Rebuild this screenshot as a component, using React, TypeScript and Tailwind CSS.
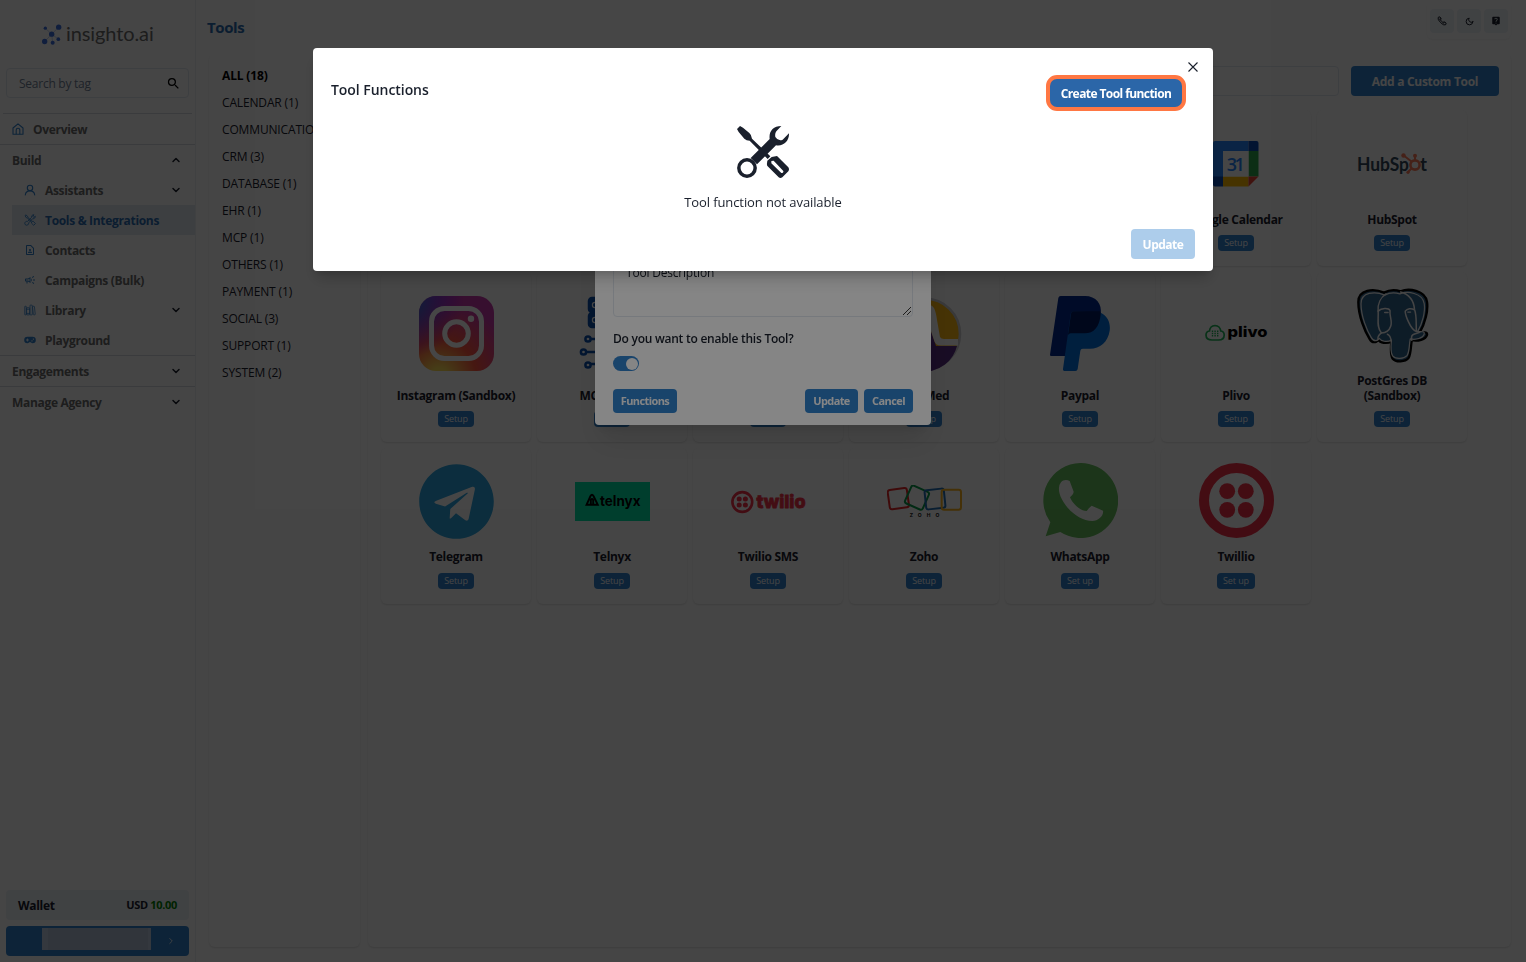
import type { ReactNode } from "react";
import { LuChevronDown, LuChevronUp, LuChevronRight } from "react-icons/lu";
import { FiMoon } from "react-icons/fi";
import { MdSearch, MdLiveHelp, MdOutlineContactPage, MdOutlineCampaign } from "react-icons/md";
import { IoLibraryOutline } from "react-icons/io5";
import { FaTelegram } from "react-icons/fa";

function HomeIcon() {
  return (
    <svg width="12" height="12" viewBox="0 0 12 12" fill="none" stroke="currentColor" strokeWidth="1.1">
      <path d="M1 5 L6 .9 L11 5 V11.3 H1 Z" strokeLinejoin="round" />
      <path d="M4.2 11.3 V7 a1.8 1.8 0 0 1 3.6 0 V11.3" />
    </svg>
  );
}

function PersonIcon() {
  return (
    <svg width="12" height="12" viewBox="0 0 12 12" fill="none" stroke="currentColor" strokeWidth="1.1">
      <circle cx="6" cy="4" r="2.7" />
      <path d="M1.3 11 C1.6 8.2 3.4 6.9 6 6.9 S10.4 8.2 10.7 11" strokeLinecap="round" />
    </svg>
  );
}

function ToolsOutlineIcon() {
  return (
    <svg width="12" height="12" viewBox="0 0 12 12" fill="none" stroke="currentColor" strokeWidth=".9" strokeLinejoin="round">
      <path d="M1 1.7 L1.9 .9 L3.6 2.3 L3.8 3.3 L8 7.4 L9.3 7.3 L11.4 9.6 L9.7 11.3 L7.4 9.1 L7.5 8 L3.2 3.9 L2.2 3.6Z" />
      <path d="M10 .8 C8.2 .7 7.2 2 7.5 3.4 L3.6 7.4 C2 7 .8 8.1 .8 9.5 A1.9 1.9 0 0 0 4.5 9.9 L5 8.5 L8.6 4.7 C10.3 5 11.3 3.8 11.3 2.2 L9.9 3.4 L8.7 2.5Z" />
    </svg>
  );
}

function GamepadIcon() {
  return (
    <svg width="12" height="8" viewBox="0 0 12 8" fill="currentColor">
      <path
        fillRule="evenodd"
        d="M3.4 .8 H8.6 A3.2 3.2 0 0 1 8.6 7.2 Q7.5 7.2 6.8 6.3 H5.2 Q4.5 7.2 3.4 7.2 A3.2 3.2 0 0 1 3.4 .8Z M3 2.6 V3.6 H2 V4.4 H3 V5.4 H3.8 V4.4 H4.8 V3.6 H3.8 V2.6Z M8 4.3 a.6 .6 0 1 0 .01 0Z M9.4 2.5 a.6 .6 0 1 0 .01 0Z"
      />
    </svg>
  );
}

function PhoneIcon() {
  return (
    <svg width="10" height="10" viewBox="0 0 10 10" fill="none" stroke="currentColor" strokeWidth="1">
      <path d="M1.1 1.6 Q2 .4 3 1 L4.1 2.6 Q4.2 3.2 3.4 3.9 Q4.3 5.5 6 6.5 Q6.8 5.7 7.4 5.9 L9 7 Q9.5 7.9 8.4 8.9 Q6.6 9.6 3.7 6.7 Q.4 3.4 1.1 1.6Z M2.2 3.4 L4 2.6 M6.3 7.6 L7.4 6" />
    </svg>
  );
}

function BrandMark() {
  return (
    <svg width="20" height="21" viewBox="0 0 60 62" fill="#3b6fe0" stroke="#3b6fe0" strokeWidth="1.5">
      <path d="M29 30 L50 9 M29 30 L10 12 M29 30 L8 52 M29 30 L49 45 M29 30 L32 56" opacity=".6" />
      <circle cx="50" cy="9" r="8" stroke="none" />
      <circle cx="10" cy="12" r="5" stroke="none" />
      <circle cx="29" cy="30" r="8" stroke="none" />
      <circle cx="8" cy="52" r="8" stroke="none" />
      <circle cx="49" cy="45" r="5.5" stroke="none" />
      <circle cx="32" cy="56" r="6" stroke="none" />
    </svg>
  );
}

function SubItem({ icon, label, active, chevron }: { icon: ReactNode; label: string; active?: boolean; chevron?: boolean }) {
  return (
    <div className={`ml-3 flex h-[30px] items-center pl-3 pr-[13px] ${active ? "bg-[#e2e8f0] text-[#2b6cb0]" : "text-[#6b6b6b]"}`}>
      <span className="flex w-3 justify-center text-[12px] text-[#3182ce]">{icon}</span>
      <span className="ml-[9px] flex-1 whitespace-nowrap pt-[2px]">{label}</span>
      {chevron && <LuChevronDown size={12} strokeWidth={3} className="text-[#1a202c]" />}
    </div>
  );
}

function Section({ label, open }: { label: string; open?: boolean }) {
  return (
    <div className="flex h-[31px] items-center border-t border-[#d5d9e0] pl-3 pr-[13px] text-[#6b6b6b]">
      <span className="flex-1 pt-[2px]">{label}</span>
      {open ? (
        <LuChevronUp size={12} strokeWidth={3} className="text-[#1a202c]" />
      ) : (
        <LuChevronDown size={12} strokeWidth={3} className="text-[#1a202c]" />
      )}
    </div>
  );
}

function Sidebar() {
  return (
    <aside className="flex w-[196px] shrink-0 flex-col border-r border-[#edf0f4] text-[12px] font-bold tracking-[-0.32px]">
      <div className="flex h-[68px] items-center gap-[4px] pl-[42px]">
        <BrandMark />
        <span className="pb-[3px] font-['Lato',sans-serif] text-[20px] font-normal leading-5 tracking-[-0.1px] text-[#6d6d6d]">insighto.ai</span>
      </div>
      <div className="mx-[6px] flex h-[30px] items-center rounded border border-[#e2e8f0] pl-3 pr-[7px] font-normal text-[#718096]">
        <span className="flex-1 pt-[2px] tracking-[-0.25px]">Search by tag</span>
        <MdSearch size={15} className="text-black" />
      </div>
      <div className="mx-[3px] mt-[15px] h-px bg-[#d5d9e0]" />
      <div className="flex h-[30px] items-center pl-3 text-[#6b6b6b]">
        <span className="text-[#3182ce]">
          <HomeIcon />
        </span>
        <span className="ml-[9px] pt-[2px]">Overview</span>
      </div>
      <Section label="Build" open />
      <SubItem icon={<PersonIcon />} label="Assistants" chevron />
      <SubItem icon={<ToolsOutlineIcon />} label="Tools & Integrations" active />
      <SubItem icon={<MdOutlineContactPage />} label="Contacts" />
      <SubItem icon={<MdOutlineCampaign />} label="Campaigns (Bulk)" />
      <SubItem icon={<IoLibraryOutline />} label="Library" chevron />
      <SubItem icon={<GamepadIcon />} label="Playground" />
      <Section label="Engagements" />
      <Section label="Manage Agency" />
      <div className="mx-[6px] mt-auto flex h-[30px] items-center rounded bg-[#edf2f7] px-3 pt-px text-[#1a202c]">
        <span className="flex-1">Wallet</span>
        <span className="text-[11px]">
          USD <span className="text-[#008000]">10.00</span>
        </span>
      </div>
      <div className="mx-[6px] mb-[6px] mt-[6px] flex h-[30px] items-center rounded bg-[#3182ce] pl-9 text-white">
        <div className="mb-1 flex h-[22px] w-[109px] bg-[#bfcfe3]">
          <div className="ml-[6px] w-[100px] bg-[#b4c5da]" />
        </div>
        <LuChevronRight size={10} className="ml-[15px]" />
      </div>
    </aside>
  );
}

const CATEGORIES = [
  "ALL (18)",
  "CALENDAR (1)",
  "COMMUNICATION (4)",
  "CRM (3)",
  "DATABASE (1)",
  "EHR (1)",
  "MCP (1)",
  "OTHERS (1)",
  "PAYMENT (1)",
  "SOCIAL (3)",
  "SUPPORT (1)",
  "SYSTEM (2)",
];

function CalendarLogo() {
  return (
    <svg width="46" height="46" viewBox="0 0 46 46">
      <path d="M2 0 H35.5 V10 H10 V36 H0 V2 Q0 0 2 0Z" fill="#2684fc" />
      <path d="M35.5 0 H43.5 Q45.5 0 45.5 2 V10 H35.5Z" fill="#0b4bb3" />
      <path d="M35.5 10 H45.5 V35.5 H35.5Z" fill="#2da94f" />
      <path d="M10 35.5 H35.5 V45.5 H10Z" fill="#ffba00" />
      <path d="M0 35.5 H10 V45.5 H2 Q0 45.5 0 43.5Z" fill="#0b4bb3" />
      <path d="M35.5 35.5 H45.5 L35.5 45.5Z" fill="#ea4335" />
      <path d="M10 10 H35.5 V35.5 H10Z" fill="#fff" />
      <text x="22.7" y="29.5" textAnchor="middle" fontFamily="Open Sans, sans-serif" fontWeight="600" fontSize="18" fill="#2684fc" textLength="18">
        31
      </text>
    </svg>
  );
}

function HubspotLogo() {
  return (
    <svg width="70" height="22" viewBox="0 0 70 22">
      <text x="0" y="17.5" fontFamily="Lato, sans-serif" fontWeight="700" fontSize="19" fill="#33475b" textLength="52" lengthAdjust="spacingAndGlyphs">
        HubSp
      </text>
      <text x="63" y="17.5" fontFamily="Lato, sans-serif" fontWeight="700" fontSize="19" fill="#33475b" textLength="7" lengthAdjust="spacingAndGlyphs">
        t
      </text>
      <g stroke="#ff7a59" fill="none" strokeWidth="2">
        <circle cx="58" cy="12" r="4.6" strokeWidth="2.6" />
        <path d="M58 7.5 V3 M54.5 8.5 L47 2.8 M54.5 15.5 L51 19" />
      </g>
      <g fill="#ff7a59">
        <circle cx="58" cy="2.8" r="2" />
        <circle cx="46.5" cy="2.5" r="2.2" />
        <circle cx="51" cy="19.3" r="1.6" />
      </g>
    </svg>
  );
}

function InstagramLogo() {
  return (
    <svg width="75" height="75" viewBox="0 0 75 75">
      <defs>
        <radialGradient id="ig-warm" cx=".27" cy="1.08" r="1">
          <stop offset="0" stopColor="#ffdd55" />
          <stop offset=".12" stopColor="#ffdd55" />
          <stop offset=".5" stopColor="#ff543e" />
          <stop offset="1" stopColor="#c837ab" />
        </radialGradient>
        <radialGradient id="ig-cool" cx="-.16" cy=".07" r=".75">
          <stop offset="0" stopColor="#3771c8" />
          <stop offset=".15" stopColor="#3771c8" />
          <stop offset="1" stopColor="#6600ff" stopOpacity="0" />
        </radialGradient>
      </defs>
      <rect width="75" height="75" rx="17" fill="url(#ig-warm)" />
      <rect width="75" height="75" rx="17" fill="url(#ig-cool)" />
      <g fill="none" stroke="#fff" strokeWidth="5">
        <rect x="12.5" y="12.5" width="50" height="50" rx="13" />
        <circle cx="37.5" cy="37.5" r="11.8" />
      </g>
      <circle cx="52" cy="22.8" r="3.2" fill="#fff" />
    </svg>
  );
}

function McpLogo() {
  return (
    <svg width="75" height="75" viewBox="0 0 75 75" fill="none" stroke="#0a4fae" strokeWidth="2.5">
      <rect x="14" y="2" width="50" height="14" rx="3" fill="#0a4fae" />
      <rect x="14" y="17" width="50" height="14" rx="3" fill="#0a4fae" />
      <circle cx="20" cy="9" r="2.6" stroke="#fff" strokeWidth="1.2" />
      <circle cx="20" cy="24" r="2.6" stroke="#fff" strokeWidth="1.2" />
      <path d="M16 43 H25 V34 M11 56 H32 M16 68 H25 V60" />
      <circle cx="13" cy="43" r="2.6" />
      <circle cx="8.5" cy="56" r="2.6" />
      <circle cx="13" cy="69" r="2.6" />
    </svg>
  );
}

function MedLogo() {
  return (
    <svg width="75" height="75" viewBox="0 0 75 75">
      <circle cx="37.5" cy="38" r="35.5" fill="#fdb913" stroke="#cfcfd4" strokeWidth="2.6" />
      <path d="M4 50 H34 L41 26 L49 50 H70 A34 34 0 0 1 4 50Z" fill="#582c83" />
      <path d="M30 50 L37 15 Q42 5 47 12 Q49 16 50 24 L53 41 Q54 43 57 43 H71 V49.5 H54 Q48 49.5 47 44 L41 26 L36 50Z" fill="#fff" />
    </svg>
  );
}

function PaypalLogo() {
  return (
    <svg width="60" height="75" viewBox="0 0 180 225">
      <path d="M32 0 H105 C138 0 157 24 152 55 C158 90 135 112 104 112 H60 L46 180 H3 Q0 180 0 176 L25 6 Q26 0 32 0Z" fill="#002991" />
      <path d="M152 50 C174 60 182 82 179 104 C174 138 150 158 120 158 H98 Q92 158 91 164 L83 219 Q82 225 76 225 H43 Q38 225 39 219 L62 54 Q63 46 70 46 Z" fill="#0070e0" />
      <path d="M70 46 H150 Q153 47 152 56 C148 92 132 112 104 112 H62 Q57 112 54 117 L63 53 Q64 46 70 46Z" fill="#001c64" />
    </svg>
  );
}

function PlivoLogo() {
  return (
    <svg width="63" height="18" viewBox="0 0 63 18">
      <path d="M7 16 Q1 16 1 11 Q1 7.5 4.5 7 Q5 1.8 10 1.5 Q15 1.8 15.8 7 Q19.2 7.5 19.2 11 Q19.2 16 13.5 16Z" fill="none" stroke="#20b559" strokeWidth="1.7" />
      <path d="M7.5 6.5 V12.7 M10.1 6.5 V12.7 M12.7 6.5 V12.7" stroke="#20b559" strokeWidth="1.4" strokeDasharray="1.5 .8" />
      <text x="22.5" y="12.8" fontFamily="Inter, sans-serif" fontWeight="800" fontSize="14.5" fill="#000" textLength="40" lengthAdjust="spacingAndGlyphs">
        plivo
      </text>
    </svg>
  );
}

function PostgresLogo() {
  const head =
    "M82 12 C50 -2 4 2 4 40 C4 82 24 130 38 152 C46 166 58 164 64 154 C70 164 90 168 104 160 C102 180 100 200 108 212 C118 224 146 222 156 210 C164 196 162 176 166 156 C184 160 208 154 212 140 C214 130 204 132 190 132 C206 106 216 66 212 40 C206 4 156 -2 132 8 C114 2 96 4 82 12Z";
  return (
    <svg width="73" height="75" viewBox="-2 -2 219 227" strokeLinejoin="round" strokeLinecap="round">
      <path d={head} fill="#336791" stroke="#000" strokeWidth="7" />
      <path d={head} fill="#336791" stroke="#fff" strokeWidth="4" transform="translate(8.5 8.5) scale(.92)" />
      <g fill="none" stroke="#fff" strokeWidth="4.5">
        <path d="M88 16 C72 26 62 46 64 68 C66 92 58 116 74 134 C66 140 62 148 64 154" />
        <path d="M132 10 C160 18 172 36 174 62 C182 84 178 108 180 130 C160 122 146 78 146 68 C152 60 164 58 174 64" />
        <path d="M64 68 C74 58 96 58 100 66 C98 84 108 100 102 114 C98 126 90 134 74 134" />
        <path d="M104 160 C102 146 98 140 92 138 M166 156 C164 148 166 140 172 138 L190 132" />
        <path d="M84 72 H94 M154 71 H162" />
      </g>
    </svg>
  );
}

function TelnyxLogo() {
  return (
    <svg width="75" height="39" viewBox="0 0 75 39">
      <rect width="75" height="39" fill="#00e3a5" />
      <path d="M11.5 22.8 L15.5 14 Q17 11.5 18.5 14 L22.8 22.8Z M15.8 23.5 V18 Q17 16 18.2 18 V23.5" fill="none" stroke="#000" strokeWidth="1.9" />
      <text x="25" y="24" fontFamily="Inter, sans-serif" fontWeight="700" fontSize="14.5" fill="#000" textLength="40.5" lengthAdjust="spacingAndGlyphs">
        telnyx
      </text>
    </svg>
  );
}

function TwilioSmsLogo() {
  return (
    <svg width="75" height="24" viewBox="0 0 75 24" fill="#f22f46">
      <circle cx="11.3" cy="12" r="9.9" fill="none" stroke="#f22f46" strokeWidth="2.6" />
      <circle cx="8.2" cy="8.9" r="2.5" />
      <circle cx="14.4" cy="8.9" r="2.5" />
      <circle cx="8.2" cy="15.1" r="2.5" />
      <circle cx="14.4" cy="15.1" r="2.5" />
      <text x="25.5" y="18.3" fontFamily="Inter, sans-serif" fontWeight="800" fontSize="18" stroke="#f22f46" strokeWidth=".8" textLength="49" lengthAdjust="spacingAndGlyphs">
        twilio
      </text>
    </svg>
  );
}

function ZohoLogo() {
  return (
    <svg width="75" height="34" viewBox="0 0 225 102" fill="none" strokeWidth="6">
      <rect x="5" y="12" width="58" height="58" rx="7" stroke="#e42527" transform="rotate(-8 34 41)" />
      <rect x="61" y="9" width="58" height="58" rx="7" stroke="#089949" transform="rotate(24 90 38)" />
      <rect x="115" y="13" width="58" height="58" rx="7" stroke="#226db4" transform="rotate(-6 144 42)" />
      <rect x="164" y="14" width="58" height="60" rx="7" stroke="#f9b21d" />
      <text x="68" y="97" fontFamily="Inter, sans-serif" fontWeight="700" fontSize="15" fill="#111" textLength="89">
        ZOHO
      </text>
    </svg>
  );
}

function WhatsappLogo() {
  return (
    <svg className="mb-[2px]" width="75" height="75" viewBox="0 0 225 225">
      <path d="M112 0 A112.5 112.5 0 1 1 52 207 L8 220 L22 178 A112.5 112.5 0 0 1 112 0Z" fill="#67c15e" />
      <path d="M54 58 C60 50 72 50 80 54 L92 86 C92 92 86 98 81 103 C88 122 112 144 131 144 C136 138 140 132 146 128 L180 143 C183 158 166 174 148 174 C96 174 44 110 48 74 Q49 64 54 58Z" fill="#fff" />
    </svg>
  );
}

function TwilioLogo() {
  return (
    <svg className="mb-[2px]" width="75" height="75" viewBox="0 0 75 75" fill="#f22f46">
      <circle cx="37.5" cy="37.5" r="32.5" fill="none" stroke="#f22f46" strokeWidth="10" />
      <circle cx="28.2" cy="28.2" r="7.9" />
      <circle cx="46.8" cy="28.2" r="7.9" />
      <circle cx="28.2" cy="46.8" r="7.9" />
      <circle cx="46.8" cy="46.8" r="7.9" />
    </svg>
  );
}

type Tool = { name: string; logo?: ReactNode; action?: string };

const ROWS: { height: string; gap: string; tools: Tool[] }[] = [
  {
    height: "h-[156px]",
    gap: "mt-2",
    tools: [{ name: "" }, { name: "" }, { name: "" }, { name: "" }, { name: "" }, { name: "Google Calendar", logo: <CalendarLogo /> }, { name: "HubSpot", logo: <HubspotLogo /> }],
  },
  {
    height: "h-[170px]",
    gap: "mt-2",
    tools: [
      { name: "Instagram (Sandbox)", logo: <InstagramLogo /> },
      { name: "MCP Server", logo: <McpLogo /> },
      { name: "" },
      { name: "ModMed", logo: <MedLogo /> },
      { name: "Paypal", logo: <PaypalLogo /> },
      { name: "Plivo", logo: <PlivoLogo /> },
      { name: "PostGres DB (Sandbox)", logo: <PostgresLogo /> },
    ],
  },
  {
    height: "h-[156px]",
    gap: "mt-[9px]",
    tools: [
      { name: "Telegram", logo: <FaTelegram size={77} className="text-[#2ca5e0]" /> },
      { name: "Telnyx", logo: <TelnyxLogo /> },
      { name: "Twilio SMS", logo: <TwilioSmsLogo /> },
      { name: "Zoho", logo: <ZohoLogo /> },
      { name: "WhatsApp", logo: <WhatsappLogo />, action: "Set up" },
      { name: "Twillio", logo: <TwilioLogo />, action: "Set up" },
    ],
  },
];

function ToolCard({ tool, height, gap }: { tool: Tool; height: string; gap: string }) {
  return (
    <div className={`flex w-[150px] flex-col items-center rounded-md bg-white pb-[15px] pt-4 shadow-[0_1px_2px_rgba(0,0,0,0.13)] ${height}`}>
      <div className="flex min-h-0 flex-1 items-center pb-[10px]">{tool.logo}</div>
      <div className="w-[122px] text-center text-[12px] font-bold leading-[15px] tracking-[-0.3px] text-[#1a202c]">{tool.name}</div>
      <div className={`flex h-4 items-center rounded bg-[#3182ce] px-[6px] text-[9px] font-medium tracking-[-0.1px] text-white ${gap}`}>{tool.action ?? "Setup"}</div>
    </div>
  );
}

function Page() {
  return (
    <div className="flex h-full bg-white text-[#1a202c]">
      <Sidebar />
      <main className="flex flex-1 flex-col pl-[12px] pr-[15px]">
        <header className="flex h-[54px] shrink-0 items-start justify-between">
          <h1 className="-ml-px pt-[16px] text-[15px] font-bold leading-[22px] tracking-[-0.4px] text-[#2b6cb0]">Tools</h1>
          <div className="flex gap-[3px] rounded-md px-[3px] pb-[6px] pt-[9px] text-[10px] shadow-[0_1px_2px_rgba(0,0,0,0.05)]">
            <span className="flex size-6 items-center justify-center rounded bg-[#edf2f7]"><PhoneIcon /></span>
            <span className="flex size-6 items-center justify-center rounded bg-[#edf2f7]"><FiMoon size={9} strokeWidth={2.6} /></span>
            <span className="flex size-6 items-center justify-center rounded bg-[#edf2f7]"><MdLiveHelp /></span>
          </div>
        </header>
        <div className="mb-[15px] flex flex-1 gap-2">
          <nav className="ml-px w-[151px] shrink-0 overflow-hidden rounded-md pl-[13px] pt-2 text-[12px] tracking-[-0.15px] shadow-[0_1px_2px_rgba(0,0,0,0.13)]">
            {CATEGORIES.map((c, i) => (
              <div key={c} className={`flex h-[27px] items-center whitespace-nowrap ${i === 0 ? "font-bold text-black" : ""}`}>{c}</div>
            ))}
          </nav>
          <section className="flex-1 rounded-md pl-[13px] pt-3 shadow-[0_1px_2px_rgba(0,0,0,0.13)]">
            <div className="flex gap-3 pr-3">
              <div className="h-[30px] flex-1 rounded border border-[#e2e8f0]" />
              <div className="flex h-[30px] w-[148px] items-center justify-center rounded bg-[#3182ce] pt-px text-[12px] font-bold tracking-[-0.3px] text-white">Add a Custom Tool</div>
            </div>
            <div className="mt-[14px] flex flex-col gap-[6px]">
              {ROWS.map((row, i) => (
                <div key={i} className="flex gap-[6px]">
                  {row.tools.map((tool, j) => (
                    <ToolCard key={j} tool={tool} height={row.height} gap={row.gap} />
                  ))}
                </div>
              ))}
            </div>
          </section>
        </div>
      </main>
    </div>
  );
}

function EditToolDialog() {
  return (
    <div className="fixed inset-0 flex items-start justify-center bg-black/48 pt-12">
      <div className="flex h-[377px] w-[336px] flex-col justify-end rounded bg-white px-[18px] pb-3 text-[#1a202c] shadow-xl">
        <div className="relative h-[72px] rounded border border-[#e2e8f0] px-3 pt-[18px] text-[12px] leading-[18px] tracking-[-0.2px]">
          Tool Description
          <svg className="absolute bottom-[1px] right-[1px]" width="8" height="8" viewBox="0 0 8 8" stroke="#222" strokeWidth=".9">
            <path d="M0 8 L8 0 M4 8 L8 4" />
          </svg>
        </div>
        <div className="mt-[13px] text-[12px] font-semibold leading-[18px] tracking-[-0.25px]">Do you want to enable this Tool?</div>
        <div className="mt-2 flex h-[15px] w-[26px] items-center justify-end rounded-full bg-[#3182ce] pr-[1.5px]">
          <div className="size-3 rounded-full bg-white" />
        </div>
        <div className="mt-[18px] flex gap-[6px] text-[11px] font-bold tracking-[-0.6px] text-white">
          <div className="mr-auto flex h-6 w-16 items-center justify-center rounded bg-[#3182ce]">Functions</div>
          <div className="flex h-6 w-[53px] items-center justify-center rounded bg-[#3182ce]">Update</div>
          <div className="flex h-6 w-[49px] items-center justify-center rounded bg-[#3182ce]">Cancel</div>
        </div>
      </div>
    </div>
  );
}

function EmptyToolsIcon() {
  return (
    <svg width="52" height="52" viewBox="0 0 156 156" fill="#1a202c">
      <path d="M9 0 L0 9 L5 18 L22 38 Q28 44 38 44 L92 99 L100 91 L45 38 Q44 27 37 21 L18 5Z" />
      <path fillRule="evenodd" d="M104 93 L120 90 L154 124 Q158 130 154 136 L136 154 Q130 158 125 154 L92 121 Q89 118 90 112 L91 104Z M103 105 L103 112 L133 141 Q140 142 139 135 L110 104Z" />
      <path d="M133 0 C108 0 95 17 98 39 L41 96 L60 115 L117 58 C140 62 157 45 156 22 L137 41 Q124 47 115 33 Q113 22 118 16Z" />
      <circle cx="30" cy="126" r="24.5" fill="#fff" stroke="#1a202c" strokeWidth="10.5" />
    </svg>
  );
}

function ToolFunctionsDialog() {
  return (
    <div className="fixed inset-0 flex items-start justify-center bg-black/48 pt-12">
      <div className="relative flex h-[223px] w-[900px] flex-col rounded bg-white px-[18px] text-[#1a202c] shadow-[0_10px_15px_-3px_rgba(0,0,0,0.2),0_4px_6px_-2px_rgba(0,0,0,0.1)]">
        <svg className="absolute right-[15.5px] top-[13.5px]" width="10" height="10" viewBox="0 0 10 10" stroke="#1a202c" strokeWidth="1.1">
          <path d="M.5 .5 L9.5 9.5 M9.5 .5 L.5 9.5" />
        </svg>
        <div className="flex items-start justify-between pt-[27px]">
          <h2 className="pt-[4px] text-[14px] font-semibold leading-[21px] tracking-[-0.05px]">Tool Functions</h2>
          <div className="mr-[9px] flex h-9 w-[140px] items-center justify-center rounded-[11px] border-4 border-[#ff7743] bg-[#ff7743]">
            <div className="flex size-full items-center justify-center rounded-[7px] bg-[#2b66a8] pt-[2px] text-[12px] font-bold tracking-[-0.58px] text-white">Create Tool function</div>
          </div>
        </div>
        <div className="mt-[15px] flex flex-col items-center">
          <EmptyToolsIcon />
          <p className="mt-[14px] text-[13px] leading-5 tracking-[-0.1px]">Tool function not available</p>
        </div>
        <div className="mb-3 mt-auto flex h-[30px] w-16 items-center justify-center self-end rounded bg-[#adcdeb] pt-px text-[12px] font-bold tracking-[-0.5px] text-white">Update</div>
      </div>
    </div>
  );
}

export default function App() {
  return (
    <div className="h-screen overflow-hidden font-['Open_Sans','Noto_Sans',sans-serif]">
      <Page />
      <EditToolDialog />
      <ToolFunctionsDialog />
    </div>
  );
}
